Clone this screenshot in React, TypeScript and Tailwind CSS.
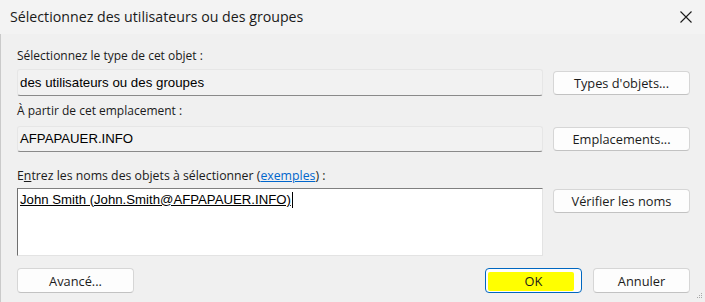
import React from "react";

const ui = { fontFamily: '"Open Sans", "Noto Sans", sans-serif' };
const ms = { fontFamily: '"Liberation Sans", Arial, sans-serif' };

function Btn({ children, className = "", primary = false }: { children: React.ReactNode; className?: string; primary?: boolean }) {
  return (
    <div
      className={
        "relative flex items-center justify-center rounded-[4px] border bg-[#fdfdfd] text-[12.8px] leading-[16px] text-[#1b1b1b] " +
        (primary ? "border-[#0067c0] " : "border-[#d6d6d6] border-b-[#c2c2c2] ") +
        className
      }
      style={ui}
    >
      {children}
    </div>
  );
}

export default function App() {
  return (
    <div className="w-[705px] h-[302px] bg-[#f0f0f0] overflow-hidden flex flex-col">
      <div className="h-[34px] shrink-0 bg-[#f3f3f3] flex items-center justify-between pl-[10px] pr-[13px]">
        <span className="text-[14.2px] leading-[18px] text-[#1a1a1a]" style={ui}>
          Sélectionnez des utilisateurs ou des groupes
        </span>
        <svg width="12" height="12" viewBox="0 0 12 12">
          <path d="M0.5 0.5 L11.5 11.5 M11.5 0.5 L0.5 11.5" stroke="#1a1a1a" strokeWidth="1.1" fill="none" />
        </svg>
      </div>
      <div className="relative flex-1 flex flex-col border-l border-[#cacaca] pl-[16px] pr-[15px]">
        <div className="mt-[14px] h-[16px] text-[12px] leading-[16px] text-[#1a1a1a]" style={ui}>
          Sélectionnez le type de cet objet :
        </div>
        <div className="mt-[5px] flex items-center gap-[10px]">
          <div
            className="w-[526px] h-[27px] rounded-[3px] border border-[#e6e6e6] border-b-[#8a8a8a] bg-[#f2f2f2] flex items-center pl-[2px] text-[13.3px] text-black"
            style={ms}
          >
            des utilisateurs ou des groupes
          </div>
          <Btn className="w-[137px] h-[24px]">Types d'objets...</Btn>
        </div>
        <div className="mt-[7px] h-[16px] text-[12px] leading-[16px] text-[#1a1a1a]" style={ui}>
          À partir de cet emplacement :
        </div>
        <div className="mt-[7px] flex items-center gap-[10px]">
          <div
            className="w-[526px] h-[26px] rounded-[3px] border border-[#e6e6e6] border-b-[#8a8a8a] bg-[#f2f2f2] flex items-center pl-[2px] text-[13.2px] text-black"
            style={ms}
          >
            AFPAPAUER.INFO
          </div>
          <Btn className="w-[137px] h-[24px]">Emplacements...</Btn>
        </div>
        <div className="mt-[16px] h-[16px] text-[12.3px] leading-[16px] text-[#1a1a1a]" style={ui}>
          E<span className="underline">n</span>trez les noms des objets à sélectionner (
          <span className="text-[#0066cc] underline">exemples</span>) :
        </div>
        <div className="mt-[4px] flex items-start gap-[10px]">
          <div className="w-[526px] h-[68px] border border-t-[#7f7f7f] border-l-[#6f6f6f] border-r-[#e3e3e3] border-b-[#e3e3e3] bg-white pl-[2px] pt-[2px]">
            <div className="flex items-center h-[17px]">
              <span className="text-[13.2px] leading-[16px] text-black underline underline-offset-[1px]" style={ms}>
                John Smith (John.Smith@AFPAPAUER.INFO)
              </span>
              <span className="ml-[1px] w-[1px] h-[16px] bg-black" />
            </div>
          </div>
          <Btn className="mt-[1px] w-[137px] h-[24px]">Vérifier les noms</Btn>
        </div>
        <div className="mt-[12px] flex items-center">
          <Btn className="w-[117px] h-[25px]">Avancé...</Btn>
          <div className="flex-1" />
          <Btn primary className="w-[97px] h-[25px]">
            <div className="absolute left-[2px] top-[3px] w-[86px] h-[19px] bg-[#ffff00] rounded-[2px]" />
            <span className="relative">OK</span>
          </Btn>
          <Btn className="ml-[11px] w-[97px] h-[25px]">Annuler</Btn>
        </div>
        <svg className="absolute right-[2px] bottom-[2px]" width="7" height="7" viewBox="0 0 7 7">
          <rect x="5" y="0" width="1" height="1" fill="#a8a8a8" />
          <rect x="3" y="2" width="1" height="1" fill="#a8a8a8" />
          <rect x="5" y="2" width="1" height="1" fill="#a8a8a8" />
          <rect x="1" y="4" width="1" height="1" fill="#a8a8a8" />
          <rect x="3" y="4" width="1" height="1" fill="#a8a8a8" />
          <rect x="5" y="4" width="1" height="1" fill="#a8a8a8" />
        </svg>
      </div>
    </div>
  );
}
